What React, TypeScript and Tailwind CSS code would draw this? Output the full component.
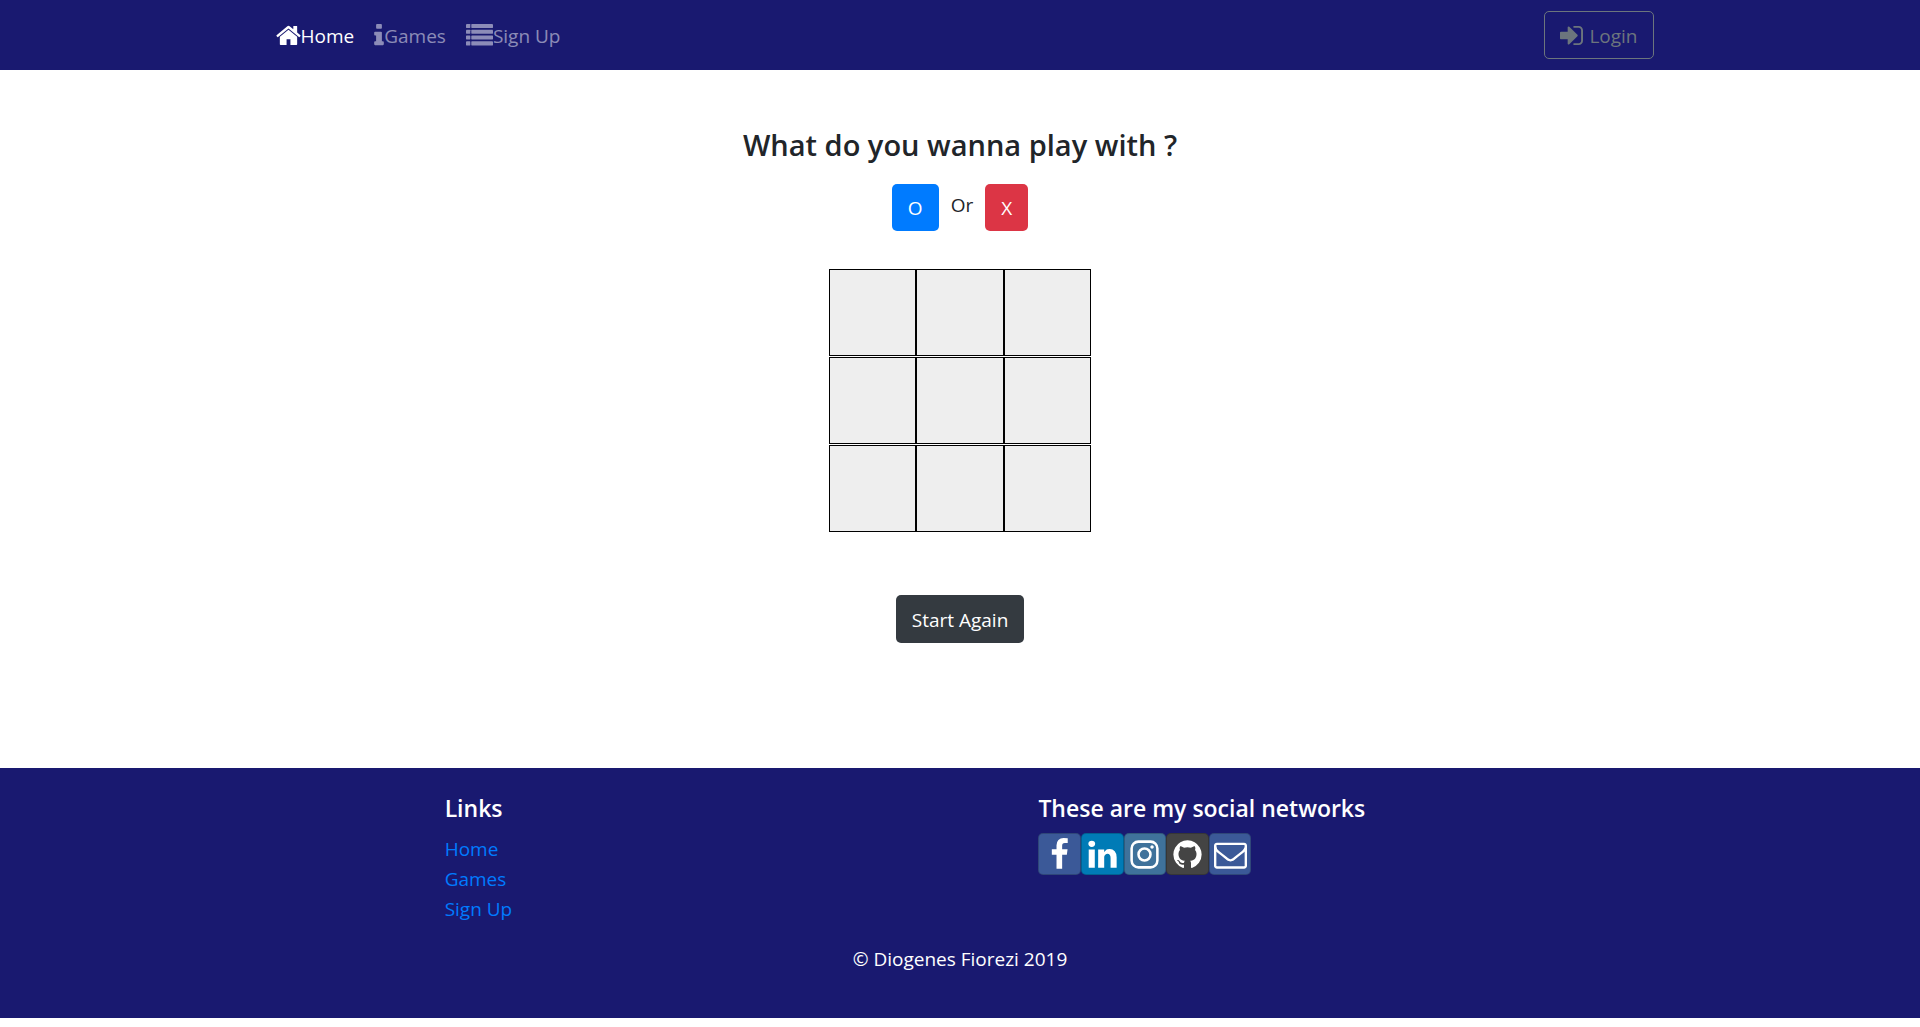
import type { ReactNode } from "react";

type GlyphProps = { viewBox: string; className: string; children: ReactNode };

function Glyph({ viewBox, className, children }: GlyphProps) {
  return (
    <svg viewBox={viewBox} className={className} fill="currentColor" aria-hidden="true">
      {children}
    </svg>
  );
}

const HomeIcon = () => (
  <Glyph viewBox="64 0 1664 1792" className="h-[27px] w-[25px] shrink-0">
    <path d="M1472 992v480q0 26-19 45t-45 19h-384v-384h-256v384h-384q-26 0-45-19t-19-45v-480q0-1 .5-3t.5-3l575-474 575 474q1 2 1 6zm223-69l-62 74q-8 9-21 11h-3q-13 0-21-7l-692-577-692 577q-12 8-24 7-13-2-21-11l-62-74q-8-10-7-23.5t11-21.5l719-599q32-26 76-26t76 26l244 204v-195q0-14 9-23t23-9h192q14 0 23 9t9 23v408l219 182q10 8 11 21.5t-7 23.5z" />
  </Glyph>
);

const InfoIcon = () => (
  <Glyph viewBox="576 0 640 1792" className="h-[27px] w-[10px] shrink-0">
    <path d="M1216 1344v128q0 26-19 45t-45 19h-512q-26 0-45-19t-19-45v-128q0-26 19-45t45-19h64v-384h-64q-26 0-45-19t-19-45v-128q0-26 19-45t45-19h384q26 0 45 19t19 45v576h64q26 0 45 19t19 45zm-128-1152v192q0 26-19 45t-45 19h-256q-26 0-45-19t-19-45v-192q0-26 19-45t45-19h256q26 0 45 19t19 45z" />
  </Glyph>
);

const ListIcon = () => (
  <Glyph viewBox="0 0 1792 1792" className="h-[27px] w-[27px] shrink-0">
    {[128, 512, 896, 1280].map((y) => (
      <g key={y}>
        <rect x="0" y={y} width="288" height="272" rx="32" />
        <rect x="352" y={y} width="1440" height="272" rx="32" />
      </g>
    ))}
  </Glyph>
);

const SignInIcon = () => (
  <Glyph viewBox="128 0 1536 1792" className="h-[27px] w-[23px] shrink-0">
    <path d="M1312 896q0 26-19 45l-544 544q-19 19-45 19t-45-19-19-45v-288h-448q-26 0-45-19t-19-45v-384q0-26 19-45t45-19h448v-288q0-26 19-45t45-19 45 19l544 544q19 19 19 45zm352-352v704q0 119-84.5 203.5t-203.5 84.5h-320q-13 0-22.5-9.5t-9.5-22.5q0-4-1-20t-.5-26.5 3-23.5 10-19.5 20.5-6.5h320q66 0 113-47t47-113v-704q0-66-47-113t-113-47h-312l-11.5-1-11.5-3-8-5.5-7-9-2-13.5q0-4-1-20t-.5-26.5 3-23.5 10-19.5 20.5-6.5h320q119 0 203.5 84.5t84.5 203.5z" />
  </Glyph>
);

const socials = [
  {
    label: "Facebook",
    color: "bg-[#3b5998]",
    art: <path d="M1343 12v264h-157q-86 0-116 36t-30 108v189h293l-39 296h-254v759h-306v-759h-255v-296h255v-218q0-186 104-288.5t277-102.5q147 0 228 12z" />,
  },
  {
    label: "LinkedIn",
    color: "bg-[#007bb6]",
    art: <path d="M477 625v991h-330v-991h330zm21-306q1 73-50.5 122t-135.5 49h-2q-82 0-132-49t-50-122q0-74 51.5-122.5t134.5-48.5 133 48.5 51 122.5zm1166 729v568h-329v-530q0-105-40.5-164.5t-126.5-59.5q-63 0-105.5 34.5t-63.5 85.5q-11 30-11 81v553h-329q2-399 2-647t-1-296l-1-48h329v144h-2q20-32 41-56t56.5-52 87-43.5 114.5-15.5q171 0 275 113.5t104 332.5z" />,
  },
  {
    label: "Instagram",
    color: "bg-[#3f729b]",
    art: (
      <>
        <rect x="197" y="197" width="1398" height="1398" rx="370" fill="none" stroke="currentColor" strokeWidth="138" />
        <path d="M1152 896q0-106-75-181t-181-75-181 75-75 181 75 181 181 75 181-75 75-181zm138 0q0 164-115 279t-279 115-279-115-115-279 115-279 279-115 279 115 115 279zm108-410q0 38-27 65t-65 27-65-27-27-65 27-65 65-27 65 27 27 65z" />
      </>
    ),
  },
  {
    label: "GitHub",
    color: "bg-[#444444]",
    art: <path d="M896 128q209 0 385.5 103t279.5 279.5 103 385.5q0 251-146.5 451.5t-378.5 277.5q-27 5-40-7t-13-30q0-3 .5-76.5t.5-134.5q0-97-52-142 57-6 102.5-18t94-39 81-66.5 53-105 20.5-150.5q0-119-79-206 37-91-8-204-28-9-81 11t-92 44l-38 24q-93-26-192-26t-192 26q-16-11-42.5-27t-83.5-38.5-85-13.5q-45 113-8 204-79 87-79 206 0 85 20.5 150t52.5 105 80.5 67 94 39 102.5 18q-39 36-49 103-21 10-45 15t-57 5-65.5-21.5-55.5-62.5q-19-32-48.5-52t-49.5-24l-20-3q-21 0-29 4.5t-5 11.5 9 14 13 12l7 5q22 10 43.5 38t31.5 51l10 23q13 38 44 61.5t67 30 69.5 7 55.5-3.5l23-4q0 38 .5 88.5t.5 54.5q0 18-13 30t-40 7q-232-77-378.5-277.5t-146.5-451.5q0-209 103-385.5t279.5-279.5 385.5-103z" />,
  },
  {
    label: "Email",
    color: "bg-[#3b5998]",
    art: <path d="M1664 1504v-768q-32 36-69 66-268 206-426 338-51 43-83 67t-86.5 48.5-102.5 24.5h-2q-48 0-102.5-24.5t-86.5-48.5-83-67q-158-132-426-338-37-30-69-66v768q0 13 9.5 22.5t22.5 9.5h1472q13 0 22.5-9.5t9.5-22.5zm0-1051v-24.5l-.5-13-3-12.5-5.5-9-9-7.5-14-2.5h-1472q-13 0-22.5 9.5t-9.5 22.5q0 168 147 284 193 152 401 317 6 5 35 29.5t46 37.5 44.5 31.5 50.5 27.5 43 9h2q20 0 43-9t50.5-27.5 44.5-31.5 46-37.5 35-29.5q208-165 401-317 54-43 100.5-115.5t46.5-131.5zm128-37v1088q0 66-47 113t-113 47h-1472q-66 0-113-47t-47-113v-1088q0-66 47-113t113-47h1472q66 0 113 47t47 113z" />,
  },
];

const cells = Array.from({ length: 9 }, (_, i) => i + 1);

function Navbar() {
  return (
    <nav className="bg-[#191970] py-[11px]">
      <div className="mx-auto flex max-w-[1425px] items-center justify-between pr-[19px] pl-[28px]">
        <ul className="flex gap-5 pt-px">
          <li>
            <a href="#home" className="flex items-center text-white">
              <HomeIcon />
              Home
            </a>
          </li>
          <li>
            <a href="#games" className="flex items-center text-white/50">
              <InfoIcon />
              Games
            </a>
          </li>
          <li>
            <a href="#signup" className="flex items-center text-white/50">
              <ListIcon />
              Sign Up
            </a>
          </li>
        </ul>
        <button type="button" className="flex h-12 items-center gap-[6px] rounded-[5px] border border-[#6c757d] px-[15px] pt-px text-[#6c757d]">
          <SignInIcon />
          Login
        </button>
      </div>
    </nav>
  );
}

function Game() {
  return (
    <main className="flex flex-col items-center pt-[54px] pb-[125px]">
      <h1 className="text-[29px] leading-[42px] font-semibold">What do you wanna play with ?</h1>
      <div className="mt-[18px] flex items-start gap-3">
        <button type="button" className="h-[47px] rounded-[5px] bg-[#007bff] px-4 text-white">
          O
        </button>
        <span className="pt-[6px]">Or</span>
        <button type="button" className="h-[47px] rounded-[5px] bg-[#dc3545] px-4 text-white">
          X
        </button>
      </div>
      <div className="mt-[38px] grid w-[262px] grid-cols-3 gap-y-px">
        {cells.map((n) => (
          <button key={n} type="button" aria-label={`Cell ${n}`} className="h-[87px] border border-black bg-[#eeeeee]" />
        ))}
      </div>
      <button type="button" className="mt-[63px] h-12 rounded-[5px] bg-[#343a40] px-4 pt-px text-white">
        Start Again
      </button>
    </main>
  );
}

function Footer() {
  return (
    <footer className="bg-[#191970] pt-[25px] pb-[44px] text-white">
      <div className="mx-auto max-w-[1425px]">
        <div className="grid grid-cols-24">
          <div className="col-span-10 col-start-4 px-[19px]">
            <h2 className="text-[23px] leading-[31px] font-semibold">Links</h2>
            <ul className="mt-[10px] text-[#007bff]">
              <li><a href="#home">Home</a></li>
              <li><a href="#games">Games</a></li>
              <li><a href="#signup">Sign Up</a></li>
            </ul>
          </div>
          <div className="col-span-10 px-[19px]">
            <h2 className="text-[23px] leading-[31px] font-semibold whitespace-nowrap">These are my social networks</h2>
            <div className="mt-[9px] flex w-[213px]">
              {socials.map((s) => (
                <a
                  key={s.label}
                  href={`#${s.label.toLowerCase()}`}
                  aria-label={s.label}
                  className={`flex h-[42px] flex-1 items-center justify-center rounded-[5px] border border-black/20 ${s.color}`}
                >
                  <Glyph viewBox="0 0 1792 1792" className="size-[33px] shrink-0">
                    {s.art}
                  </Glyph>
                </a>
              ))}
            </div>
          </div>
        </div>
        <p className="mt-[20px] text-center">© Diogenes Fiorezi 2019</p>
      </div>
    </footer>
  );
}

export default function App() {
  return (
    <div className="min-h-screen bg-white font-['Open_Sans','Noto_Sans',sans-serif] text-[19px] leading-[30px] text-[#212529]">
      <Navbar />
      <Game />
      <Footer />
    </div>
  );
}
